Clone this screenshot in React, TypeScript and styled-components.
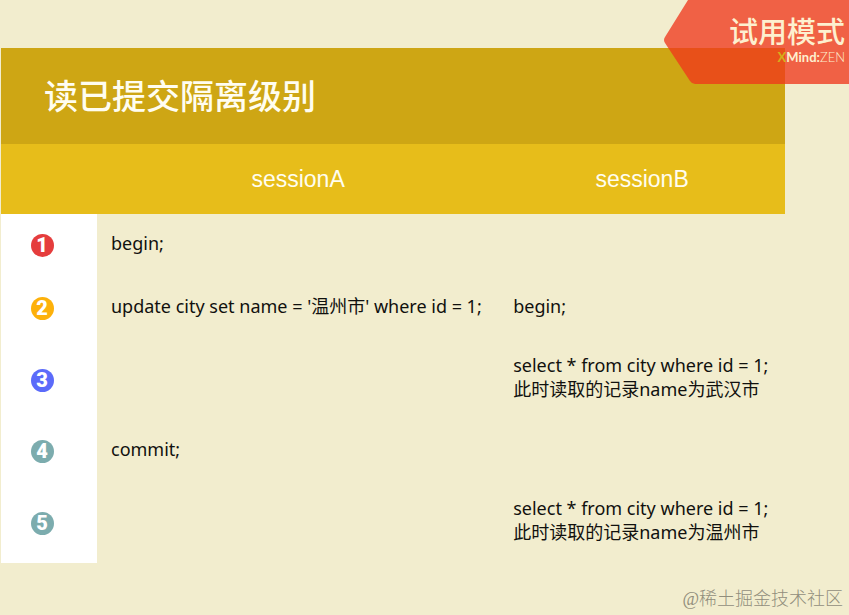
import React from "react";
import styled, { createGlobalStyle } from "styled-components";

const GlobalStyle = createGlobalStyle`
  * { box-sizing: border-box; }
  body {
    margin: 0;
    background: #f2edce;
    font-family: "Noto Sans", "Noto Sans CJK SC", sans-serif;
    color: #11110e;
  }
`;

const Page = styled.main`
  display: flex;
  flex-direction: column;
  min-height: 100vh;
  padding: 48px 64px 0 1px;
`;

const SessionTable = styled.table`
  width: 100%;
  border-collapse: collapse;
  table-layout: fixed;
  font-size: 18px;
  line-height: 24px;
`;

const Title = styled.caption`
  height: 96px;
  padding: 0 43px;
  background: #cea614;
  color: #fffdf0;
  font-size: 34px;
  font-weight: 500;
  line-height: 96px;
  text-align: left;
`;

const StepColumn = styled.col`
  width: 96px;
`;

const SessionAColumn = styled.col`
  width: 51.3%;
`;

const HeadCell = styled.th`
  height: 70px;
  padding: 0;
  background: #e7bd1a;
  color: #fffdf0;
  font-family: "Liberation Sans", Arial, sans-serif;
  font-size: 23px;
  font-weight: 400;
`;

const StepCell = styled.th`
  padding: 0 14px 0 0;
  background: #ffffff;
  text-align: center;
`;

const Row = styled.tr<{ $tall: boolean }>`
  height: ${({ $tall }) => ($tall ? 80 : 63)}px;
`;

const Cell = styled.td`
  padding: 0 14px 6px;
  white-space: nowrap;
`;

const Badge = styled.span<{ $color: string }>`
  display: flex;
  align-items: center;
  justify-content: center;
  width: 23px;
  height: 23px;
  margin: 0 auto;
  border-radius: 50%;
  background: ${({ $color }) => $color};
  color: #ffffff;
  font-family: Roboto, sans-serif;
  font-size: 20px;
  font-weight: 900;
  line-height: 23px;
`;

const Banner = styled.aside`
  position: absolute;
  top: 0;
  right: 0;
  width: 185px;
  height: 84px;
  padding: 14px 4px 0 0;
  text-align: right;
  color: #fdf0cf;
`;

const BannerShape = styled.svg`
  position: absolute;
  inset: 0;
`;

const BannerTitle = styled.div`
  position: relative;
  font-size: 29px;
  font-weight: 500;
  line-height: 35px;
`;

const BannerBrand = styled.div`
  position: relative;
  font-family: Lato, sans-serif;
  font-size: 13px;
  line-height: 16px;
  font-weight: 300;
`;

const BrandX = styled.span`
  color: #d3b01c;
  font-weight: 700;
`;

const BrandName = styled.b`
  font-weight: 700;
`;

const Watermark = styled.footer`
  position: absolute;
  right: 6px;
  bottom: 4px;
  color: #918e7c;
  font-family: "Liberation Serif", "Noto Sans CJK SC", serif;
  font-size: 18px;
  font-weight: 300;
  line-height: 24px;
`;

const steps = [
  { color: "#e53d3d", a: ["begin;"], b: [] },
  { color: "#fdb10b", a: ["update city set name = '温州市' where id = 1;"], b: ["begin;"] },
  { color: "#5b6bfa", a: [], b: ["select * from city where id = 1;", "此时读取的记录name为武汉市"] },
  { color: "#7cacae", a: ["commit;"], b: [] },
  { color: "#7cacae", a: [], b: ["select * from city where id = 1;", "此时读取的记录name为温州市"] },
];

function Lines({ lines }: { lines: string[] }) {
  return (
    <>
      {lines.map((line) => (
        <div key={line}>{line}</div>
      ))}
    </>
  );
}

export default function App() {
  return (
    <>
      <GlobalStyle />
      <Page>
        <SessionTable>
          <Title>读已提交隔离级别</Title>
          <colgroup>
            <StepColumn />
            <SessionAColumn />
            <col />
          </colgroup>
          <thead>
            <tr>
              <HeadCell as="td" />
              <HeadCell scope="col">sessionA</HeadCell>
              <HeadCell scope="col">sessionB</HeadCell>
            </tr>
          </thead>
          <tbody>
            {steps.map((step, i) => (
              <Row key={i} $tall={step.b.length > 1}>
                <StepCell scope="row">
                  <Badge $color={step.color}>{i + 1}</Badge>
                </StepCell>
                <Cell><Lines lines={step.a} /></Cell>
                <Cell><Lines lines={step.b} /></Cell>
              </Row>
            ))}
          </tbody>
        </SessionTable>
      </Page>
      <Banner>
        <BannerShape width="185" height="84" viewBox="0 0 185 84" aria-hidden="true">
          <path
            d="M24 0H185V84H31Q28 84 26 81L1 43Q-1 40 1 37Z"
            fill="#f0361b"
            fillOpacity="0.77"
          />
        </BannerShape>
        <BannerTitle>试用模式</BannerTitle>
        <BannerBrand>
          <BrandX>X</BrandX>
          <BrandName>Mind:</BrandName>ZEN
        </BannerBrand>
      </Banner>
      <Watermark>@稀土掘金技术社区</Watermark>
    </>
  );
}
